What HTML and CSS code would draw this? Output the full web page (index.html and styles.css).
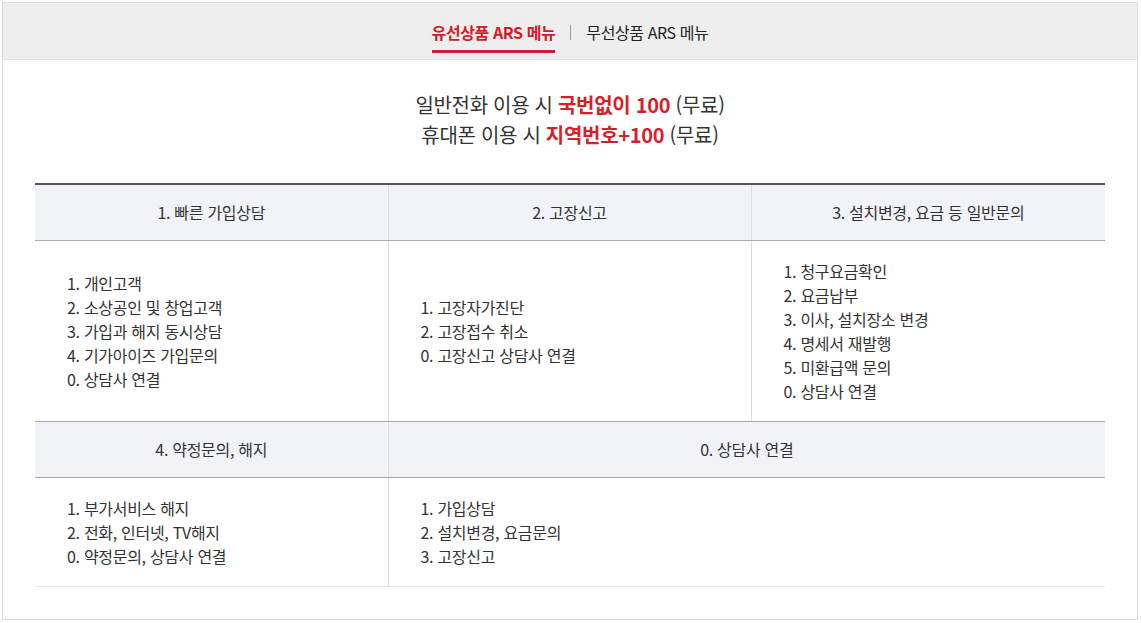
FILE: index.html
```html
<!DOCTYPE html>
<html lang="ko">
<head>
<meta charset="utf-8">
<title>ARS 메뉴</title>
<link rel="stylesheet" href="styles.css">
</head>
<body>
<div class="frame">
  <div class="tabs">
    <a class="tab tab-active">유선상품 ARS 메뉴</a>
    <span class="tab-sep"></span>
    <a class="tab">무선상품 ARS 메뉴</a>
  </div>
  <div class="content">
    <p class="headline">
      일반전화 이용 시 <strong>국번없이 100</strong> (무료)<br>
      휴대폰 이용 시 <strong>지역번호+100</strong> (무료)
    </p>
    <table class="ars">
      <colgroup>
        <col class="c1">
        <col class="c2">
        <col class="c3">
      </colgroup>
      <tbody>
        <tr class="head-row first">
          <th>1. 빠른 가입상담</th>
          <th>2. 고장신고</th>
          <th>3. 설치변경, 요금 등 일반문의</th>
        </tr>
        <tr class="body-row">
          <td>1. 개인고객<br>2. 소상공인 및 창업고객<br>3. 가입과 해지 동시상담<br>4. 기가아이즈 가입문의<br>0. 상담사 연결</td>
          <td>1. 고장자가진단<br>2. 고장접수 취소<br>0. 고장신고 상담사 연결</td>
          <td>1. 청구요금확인<br>2. 요금납부<br>3. 이사, 설치장소 변경<br>4. 명세서 재발행<br>5. 미환급액 문의<br>0. 상담사 연결</td>
        </tr>
        <tr class="head-row">
          <th>4. 약정문의, 해지</th>
          <th colspan="2">0. 상담사 연결</th>
        </tr>
        <tr class="body-row last">
          <td>1. 부가서비스 해지<br>2. 전화, 인터넷, TV해지<br>0. 약정문의, 상담사 연결</td>
          <td colspan="2">1. 가입상담<br>2. 설치변경, 요금문의<br>3. 고장신고</td>
        </tr>
      </tbody>
    </table>
  </div>
</div>
</body>
</html>
```

FILE: styles.css
```css
* { box-sizing: border-box; }
html, body { margin: 0; padding: 0; background: #fff; }
body {
  font-family: "Noto Sans CJK KR", "Noto Sans", sans-serif;
  color: #333;
}
.frame {
  margin: 2px 3px 3px 2px;
  height: 618px;
  border: 1px solid #dcdcdc;
  background: #fff;
}
.tabs {
  display: flex;
  justify-content: center;
  align-items: flex-start;
  gap: 15px;
  background: #eeeeee;
  border-bottom: 1px solid #e4e4e4;
  padding: 18px 0 0;
  height: 57px;
}
.tab {
  font-size: 16px;
  line-height: 22px;
  letter-spacing: -0.4px;
  color: #222;
  padding-bottom: 7px;
  text-decoration: none;
}
.tab-active {
  color: #d51a27;
  font-weight: 700;
  border-bottom: 3px solid #c8202d;
}
.tab-sep {
  width: 1px;
  height: 15px;
  margin-top: 4px;
  background: #999;
}
.content {
  padding: 0 32px;
}
.headline {
  margin: 30px 0 33px;
  text-align: center;
  font-size: 20px;
  line-height: 30px;
  color: #333;
  letter-spacing: -0.3px;
}
.headline strong {
  color: #d71f2b;
  font-weight: 700;
}
.ars {
  width: 100%;
  border-collapse: collapse;
  border-top: 2px solid #555;
  font-size: 16px;
  letter-spacing: -0.3px;
}
.ars col.c1 { width: 353px; }
.ars col.c2 { width: 363px; }
.ars col.c3 { width: 354px; }
.ars th {
  background: #f2f3f9;
  font-weight: 400;
  color: #333;
  height: 56px;
  padding: 0;
  text-align: center;
  border-left: 1px solid #dddddd;
  border-bottom: 1px solid #aaaaaa;
}
.ars .body-row td {
  padding: 18px 32px;
  line-height: 24px;
  vertical-align: middle;
  border-left: 1px solid #dddddd;
  border-bottom: 1px solid #aaaaaa;
}
.ars .body-row.last td {
  border-bottom: 1px solid #e6e6e6;
}
.ars th:first-child,
.ars td:first-child {
  border-left: none;
}
```
